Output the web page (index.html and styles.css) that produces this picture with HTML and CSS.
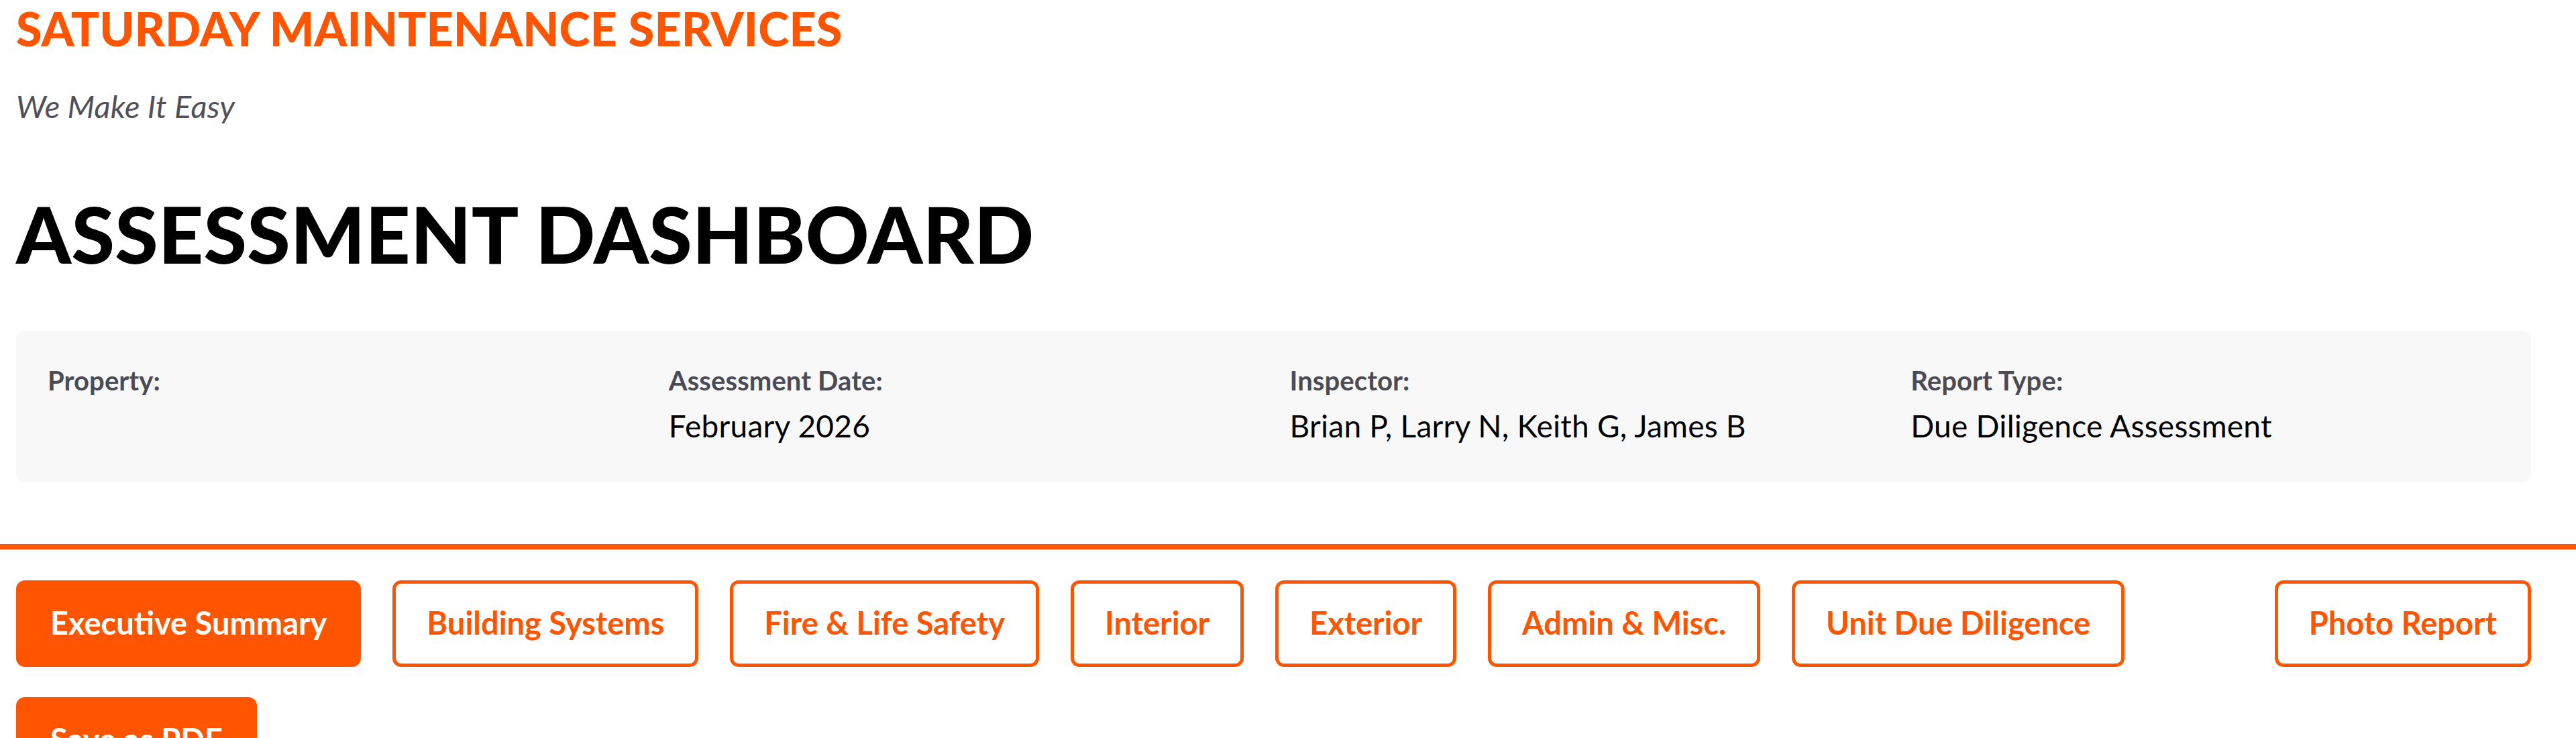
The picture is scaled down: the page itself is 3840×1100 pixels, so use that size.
FILE: index.html
```html
<!DOCTYPE html>
<html lang="en">
<head>
<meta charset="utf-8">
<title>Assessment Dashboard</title>
<link rel="stylesheet" href="styles.css">
</head>
<body>
<div class="top">
  <header class="brand">
    <div class="brand-name">SATURDAY MAINTENANCE SERVICES</div>
    <div class="tagline">We Make It Easy</div>
  </header>
  <h1 class="page-title">ASSESSMENT DASHBOARD</h1>
  <section class="info-card">
    <div class="info-item">
      <div class="info-label">Property:</div>
      <div class="info-value"></div>
    </div>
    <div class="info-item">
      <div class="info-label">Assessment Date:</div>
      <div class="info-value">February 2026</div>
    </div>
    <div class="info-item">
      <div class="info-label">Inspector:</div>
      <div class="info-value">Brian P, Larry N, Keith G, James B</div>
    </div>
    <div class="info-item">
      <div class="info-label">Report Type:</div>
      <div class="info-value">Due Diligence Assessment</div>
    </div>
  </section>
</div>
<div class="divider"></div>
<nav class="tabs">
  <button class="tab tab-active">Executive Summary</button>
  <button class="tab">Building Systems</button>
  <button class="tab">Fire &amp; Life Safety</button>
  <button class="tab">Interior</button>
  <button class="tab">Exterior</button>
  <button class="tab">Admin &amp; Misc.</button>
  <button class="tab">Unit Due Diligence</button>
  <button class="tab tab-push">Photo Report</button>
  <button class="tab tab-active">Save as PDF</button>
</nav>
</body>
</html>
```
FILE: styles.css
```css
html, body {
  margin: 0;
  padding: 0;
  background: #ffffff;
}
body {
  font-family: Lato, "Open Sans", sans-serif;
  color: #000;
}
.top {
  padding: 0 67px 0 24px;
}
.brand-name {
  font-size: 70px;
  line-height: 84px;
  font-weight: 900;
  color: #ff5400;
  letter-spacing: 0.1px;
}
.tagline {
  margin-top: 46px;
  font-size: 47px;
  line-height: 56px;
  font-style: italic;
  font-weight: 400;
  color: #50505a;
  letter-spacing: 0.2px;
}
.page-title {
  margin: 92px 0 0 0;
  font-size: 117px;
  line-height: 140px;
  font-weight: 900;
  color: #000;
  letter-spacing: 0.3px;
}
.info-card {
  margin-top: 75px;
  background: #f8f8f8;
  border-radius: 14px;
  padding: 50px 47px 57px 47px;
  display: grid;
  grid-template-columns: repeat(4, 1fr);
  column-gap: 48px;
}
.info-label {
  font-size: 40px;
  line-height: 48px;
  font-weight: 700;
  color: #4b4b55;
  letter-spacing: 0.1px;
}
.info-value {
  margin-top: 16px;
  font-size: 46px;
  line-height: 55px;
  min-height: 55px;
  color: #000;
  letter-spacing: 0.25px;
}
.divider {
  margin-top: 92px;
  height: 8px;
  background: #ff5400;
}
.tabs {
  display: flex;
  flex-wrap: wrap;
  column-gap: 47px;
  row-gap: 45px;
  padding: 46px 67px 0 24px;
}
.tab {
  box-sizing: border-box;
  height: 129px;
  padding: 0 46px 4px 46px;
  border: 5px solid #ff5400;
  border-radius: 13px;
  background: #fff;
  color: #ff5400;
  font-family: Lato, "Open Sans", sans-serif;
  font-size: 47px;
  font-weight: 700;
  line-height: 56px;
  letter-spacing: 0;
  display: inline-flex;
  align-items: center;
  white-space: nowrap;
  cursor: pointer;
}
.tab-active {
  background: #ff5400;
  color: #fff;
}
.tab-push {
  margin-left: auto;
}
```
